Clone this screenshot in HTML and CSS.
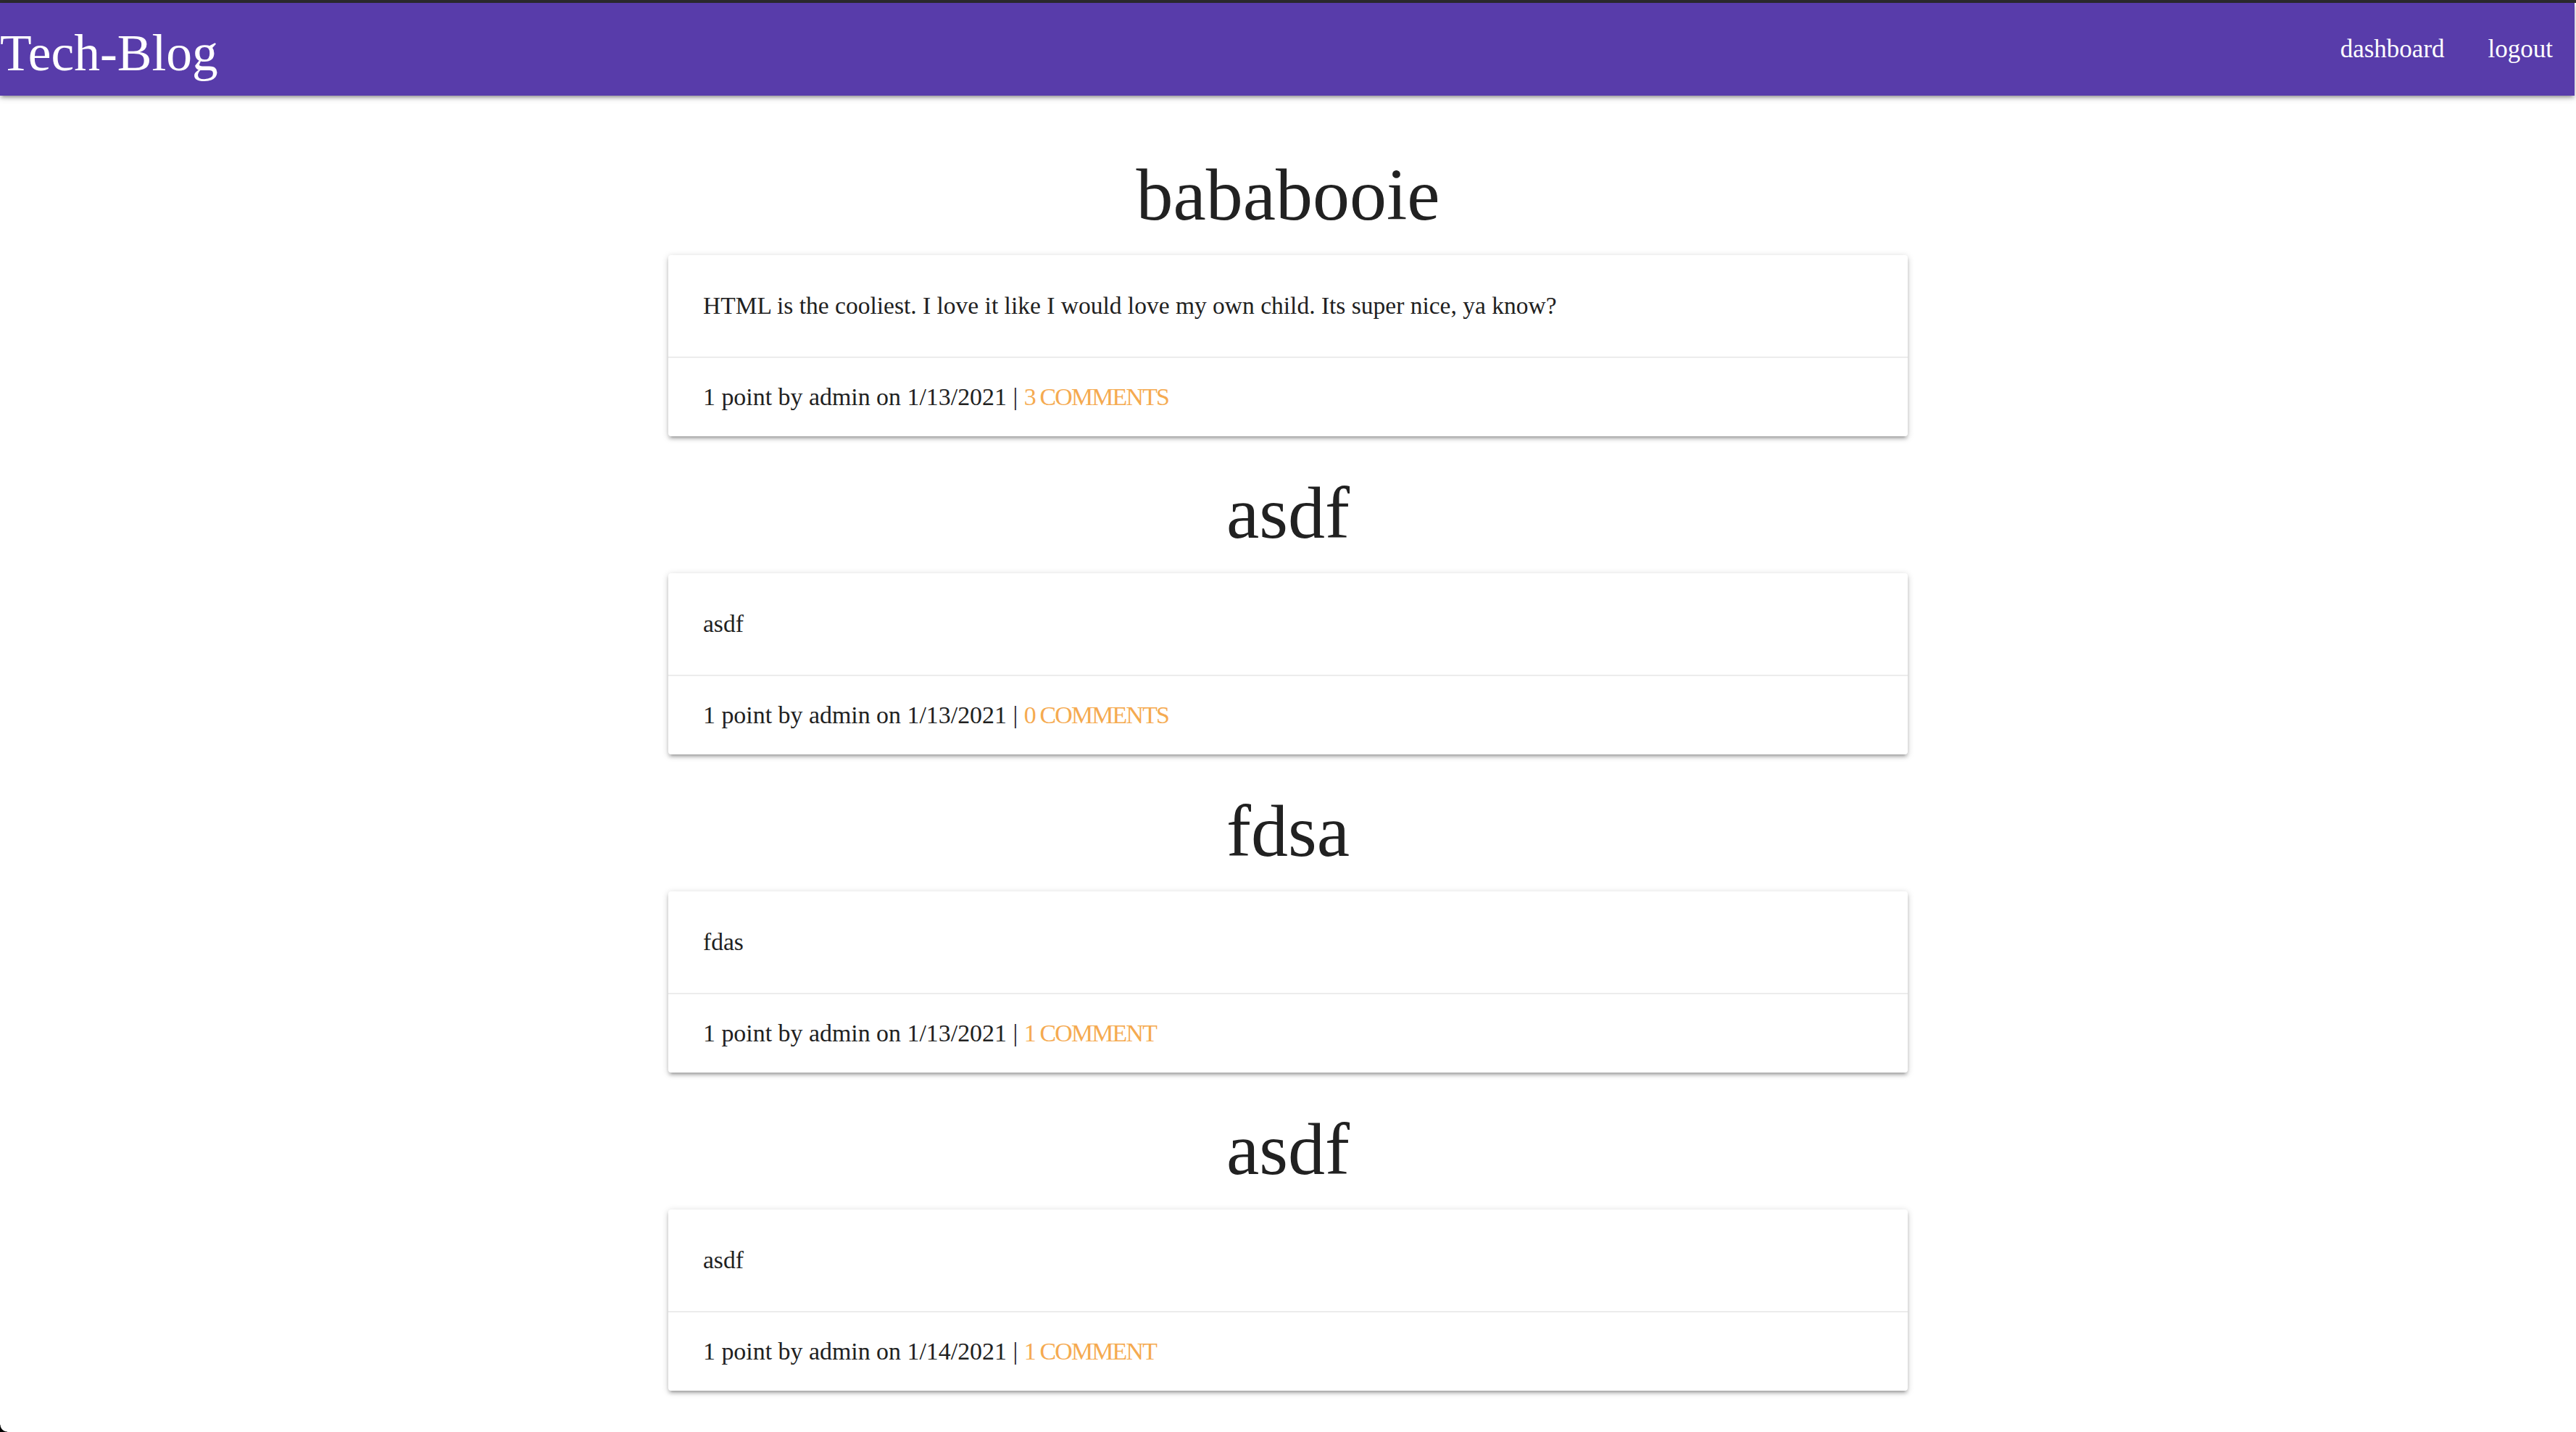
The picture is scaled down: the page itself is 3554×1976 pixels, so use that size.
FILE: index.html
```html
<!DOCTYPE html>
<html lang="en">
<head>
<meta charset="utf-8">
<title>Tech-Blog</title>
<link rel="stylesheet" href="styles.css">
</head>
<body>
<div class="topbar"></div>
<nav class="nav">
  <a class="brand" href="#">Tech-Blog</a>
  <ul class="nav-links">
    <li><a href="#">dashboard</a></li>
    <li><a href="#">logout</a></li>
  </ul>
</nav>
<main class="posts">
  <h2 class="post-title">bababooie</h2>
  <div class="card">
    <div class="card-content">HTML is the cooliest. I love it like I would love my own child. Its super nice, ya know?</div>
    <div class="card-action">1 point by admin on 1/13/2021 | <a href="#">3 comments</a></div>
  </div>

  <h2 class="post-title">asdf</h2>
  <div class="card">
    <div class="card-content">asdf</div>
    <div class="card-action">1 point by admin on 1/13/2021 | <a href="#">0 comments</a></div>
  </div>

  <h2 class="post-title">fdsa</h2>
  <div class="card">
    <div class="card-content">fdas</div>
    <div class="card-action">1 point by admin on 1/13/2021 | <a href="#">1 comment</a></div>
  </div>

  <h2 class="post-title">asdf</h2>
  <div class="card">
    <div class="card-content">asdf</div>
    <div class="card-action">1 point by admin on 1/14/2021 | <a href="#">1 comment</a></div>
  </div>
</main>
</body>
</html>
```

FILE: styles.css
```css
html, body {
  margin: 0;
  padding: 0;
  background: #ffffff;
}

body {
  font-family: "Liberation Serif", "Times New Roman", serif;
  color: #212121;
  min-height: 1976px;
  overflow: hidden;
}

body::after {
  content: "";
  position: fixed;
  left: 0;
  bottom: 0;
  width: 10px;
  height: 10px;
  background: radial-gradient(circle at 100% 0, transparent 9px, #000 10px);
}

.topbar {
  height: 4px;
  background: #2c2b2e;
}

.nav {
  display: flex;
  justify-content: space-between;
  align-items: flex-start;
  height: 128px;
  margin-right: 2px;
  background: #583caa;
  box-shadow: 0 4px 4px 0 rgba(0,0,0,.14), 0 6px 2px -4px rgba(0,0,0,.12), 0 2px 10px 0 rgba(0,0,0,.2);
  position: relative;
  z-index: 2;
}

.brand {
  display: block;
  margin-top: 10px;
  line-height: 118px;
  font-size: 71.5px;
  color: #ffffff;
  text-decoration: none;
}

.nav-links {
  display: flex;
  list-style: none;
  margin: 0;
  padding: 0;
}

.nav-links a {
  display: block;
  padding: 0 30px;
  line-height: 128px;
  font-size: 35px;
  color: #ffffff;
  text-decoration: none;
}

.posts {
  width: 1710px;
  margin: 0 auto;
  padding-top: 31px;
}

.post-title {
  margin: 46px 0 23px;
  font-size: 102px;
  line-height: 120px;
  font-weight: 400;
  text-align: center;
  color: #212121;
}

.card {
  background: #ffffff;
  border-radius: 4px;
  box-shadow: 0 4px 4px 0 rgba(0,0,0,.14), 0 6px 2px -4px rgba(0,0,0,.12), 0 2px 10px 0 rgba(0,0,0,.2);
}

.card-content {
  padding: 48px;
  font-size: 33.5px;
  line-height: 44px;
}

.card-action {
  padding: 32px 48px;
  border-top: 2px solid rgba(160,160,160,.2);
  font-size: 33.9px;
  line-height: 44px;
}

.card-action a {
  color: #f5aa50;
  text-decoration: none;
  text-transform: uppercase;
  letter-spacing: -1.8px;
}
```
